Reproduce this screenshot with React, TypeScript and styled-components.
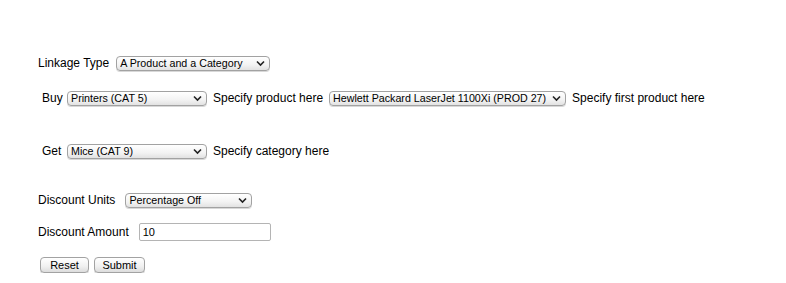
import styled, { createGlobalStyle } from 'styled-components';

const GlobalStyle = createGlobalStyle`
    body {
        margin: 8px;
        background: #ffffff;
        font-family: "Liberation Sans", Arial, sans-serif;
        color: #000000;
    }
`;

const Form = styled.form`
    display: flex;
    flex-direction: column;
    padding: 46px 0 0 30px;
`;

const Row = styled.div<{ $top: number; $indent?: number }>`
    display: flex;
    align-items: center;
    height: 18px;
    margin-top: ${(p) => p.$top}px;
    padding-left: ${(p) => p.$indent ?? 0}px;
    gap: 6px;
    font-size: 12px;
    white-space: nowrap;
`;

const Label = styled.span<{ $width?: number; $space?: number }>`
    font-size: 12px;
    ${(p) => (p.$width ? `width: ${p.$width}px;` : '')}
    margin-right: ${(p) => p.$space ?? 0}px;
`;

const SelectWrap = styled.div<{ $width: number }>`
    position: relative;
    width: ${(p) => p.$width}px;
    height: 15px;
`;

const NativeSelect = styled.select`
    appearance: none;
    -webkit-appearance: none;
    box-sizing: border-box;
    width: 100%;
    height: 100%;
    margin: 0;
    padding: 0 18px 0 3px;
    border: 1px solid #a2a2a2;
    border-radius: 4px;
    background: linear-gradient(to bottom, #ffffff 0%, #f3f3f3 60%, #e2e2e2 100%);
    box-shadow: 0 1px 0 #d8d8d8;
    font-family: "Liberation Sans", Arial, sans-serif;
    font-size: 10.7px;
    line-height: 13px;
    color: #000;
    outline: none;
`;

const Chevron = styled.svg`
    position: absolute;
    right: 5px;
    top: 4px;
    width: 9px;
    height: 7px;
    pointer-events: none;
`;

const TextInput = styled.input`
    box-sizing: border-box;
    width: 132px;
    height: 18px;
    margin: 0;
    padding: 0 3px;
    border: 1px solid #b4b4b4;
    border-radius: 2px;
    background: #fff;
    font-family: "Liberation Sans", Arial, sans-serif;
    font-size: 11px;
    outline: none;
`;

const ButtonRow = styled.div`
    display: flex;
    gap: 5px;
    margin-top: 16px;
    padding-left: 2px;
`;

const Button = styled.button<{ $width: number }>`
    box-sizing: border-box;
    width: ${(p) => p.$width}px;
    height: 16px;
    margin: 0;
    padding: 0;
    border: 1px solid #a2a2a2;
    border-radius: 4px;
    background: linear-gradient(to bottom, #ffffff 0%, #f0f0f0 60%, #dcdcdc 100%);
    box-shadow: 0 1px 0 #d0d0d0;
    font-family: "Liberation Sans", Arial, sans-serif;
    font-size: 11px;
    line-height: 14px;
    color: #000;
`;

function Select({ width, value }: { width: number; value: string }) {
    return (
        <SelectWrap $width={width}>
            <NativeSelect defaultValue={value}>
                <option>{value}</option>
            </NativeSelect>
            <Chevron viewBox="0 0 9 7">
                <path d="M1 1.5 L4.5 5 L8 1.5" fill="none" stroke="#222" strokeWidth="1.6" />
            </Chevron>
        </SelectWrap>
    );
}

export default function App() {
    return (
        <>
            <GlobalStyle />
            <Form onSubmit={(e) => e.preventDefault()}>
                <Row $top={0}>
                    <Label $space={1}>Linkage Type</Label>
                    <Select width={154} value="A Product and a Category" />
                </Row>
                <Row $top={17} $indent={4}>
                    <Label $width={19}>Buy</Label>
                    <Select width={140} value="Printers (CAT 5)" />
                    <Label>Specify product here</Label>
                    <Select width={237} value="Hewlett Packard LaserJet 1100Xi (PROD 27)" />
                    <Label>Specify first product here</Label>
                </Row>
                <Row $top={35} $indent={4}>
                    <Label $width={19}>Get</Label>
                    <Select width={140} value="Mice (CAT 9)" />
                    <Label $space={-1}>Specify category here</Label>
                </Row>
                <Row $top={31}>
                    <Label $space={4}>Discount Units</Label>
                    <Select width={127} value="Percentage Off" />
                </Row>
                <Row $top={14}>
                    <Label $space={4}>Discount Amount</Label>
                    <TextInput defaultValue="10" />
                </Row>
                <ButtonRow>
                    <Button type="reset" $width={49}>Reset</Button>
                    <Button type="submit" $width={51}>Submit</Button>
                </ButtonRow>
            </Form>
        </>
    );
}
